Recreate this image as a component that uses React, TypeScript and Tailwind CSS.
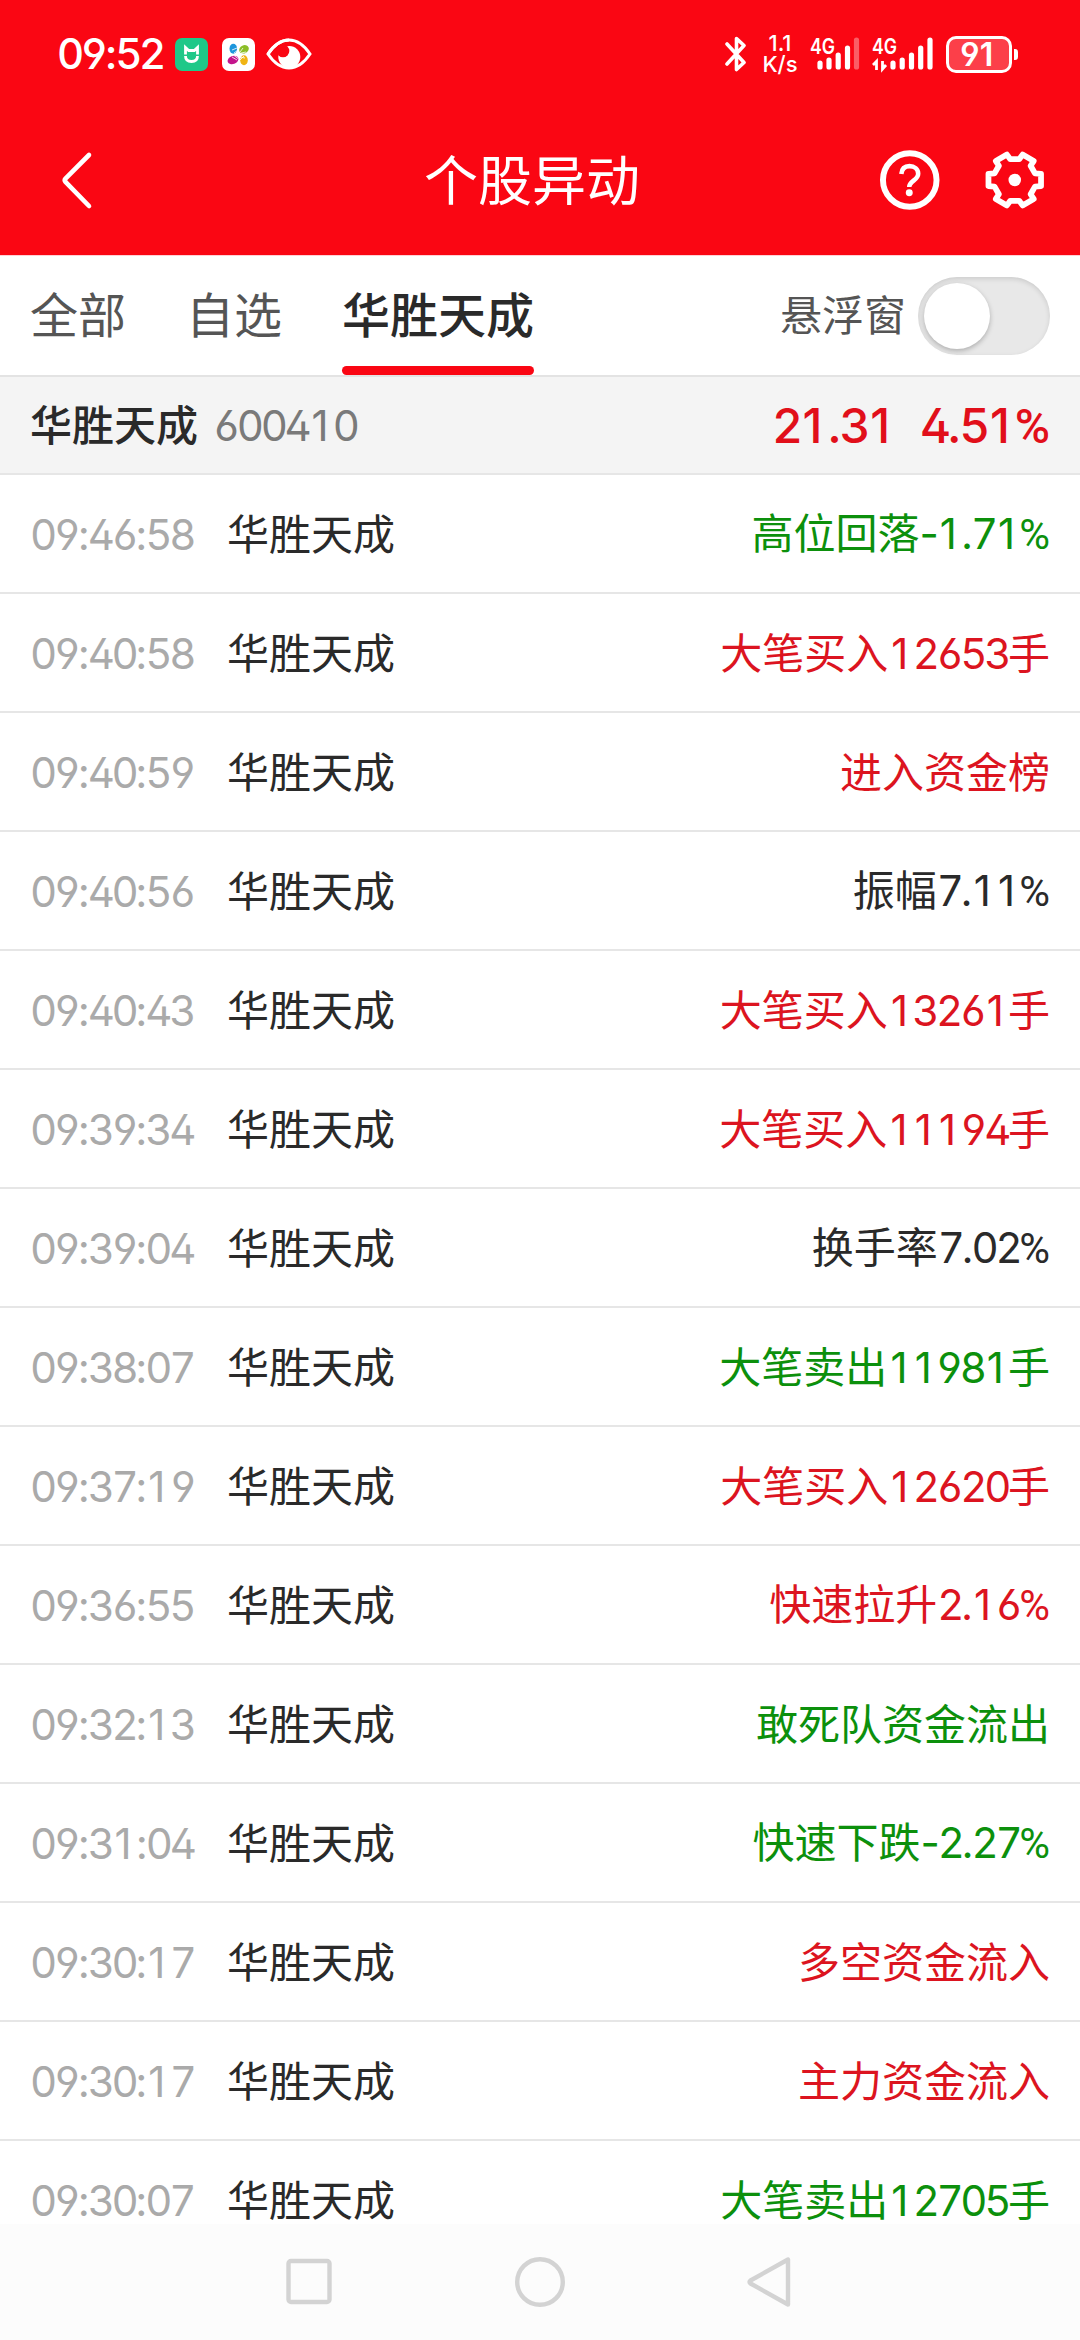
import { useState } from "react";
import clsx from "clsx";

type Trend = "up" | "down" | "flat";

interface Movement {
    time: string;
    label: string;
    value?: string;
    unit?: string;
    trend: Trend;
}

const STOCK_NAME = "华胜天成";

const TABS = ["全部", "自选", STOCK_NAME];

const MOVEMENTS: Movement[] = [
    { time: "09:46:58", label: "高位回落", value: "-1.71%", trend: "down" },
    { time: "09:40:58", label: "大笔买入", value: "12653", unit: "手", trend: "up" },
    { time: "09:40:59", label: "进入资金榜", trend: "up" },
    { time: "09:40:56", label: "振幅", value: "7.11%", trend: "flat" },
    { time: "09:40:43", label: "大笔买入", value: "13261", unit: "手", trend: "up" },
    { time: "09:39:34", label: "大笔买入", value: "11194", unit: "手", trend: "up" },
    { time: "09:39:04", label: "换手率", value: "7.02%", trend: "flat" },
    { time: "09:38:07", label: "大笔卖出", value: "11981", unit: "手", trend: "down" },
    { time: "09:37:19", label: "大笔买入", value: "12620", unit: "手", trend: "up" },
    { time: "09:36:55", label: "快速拉升", value: "2.16%", trend: "up" },
    { time: "09:32:13", label: "敢死队资金流出", trend: "down" },
    { time: "09:31:04", label: "快速下跌", value: "-2.27%", trend: "down" },
    { time: "09:30:17", label: "多空资金流入", trend: "up" },
    { time: "09:30:17", label: "主力资金流入", trend: "up" },
    { time: "09:30:07", label: "大笔卖出", value: "12705", unit: "手", trend: "down" },
];

const trendColor: Record<Trend, string> = {
    up: "text-[#dc1420]",
    down: "text-[#0c900c]",
    flat: "text-[#2a2a2a]",
};

// Tabular digits with open 4, 6 and 9. The tabular "1" has a foot,
// so the plain one is used and padded to the same width.
function Num({ text }: { text: string }) {
    return (
        <span className="tracking-[-0.05em]">
            {text.split(/(1|%|[02-9]+)/).map((part, i) => {
                if (part === "1") {
                    return (
                        <span key={i} className="pl-[0.072em] tracking-[0.1em]">
                            {part}
                        </span>
                    );
                }
                if (part === "%") {
                    return (
                        <span key={i} className="font-['Roboto',sans-serif] tracking-normal">
                            {part}
                        </span>
                    );
                }
                if (/\d/.test(part)) {
                    return (
                        <span
                            key={i}
                            className="tracking-[-0.081em] [font-feature-settings:'tnum','cv02','cv03','cv04']"
                        >
                            {part}
                        </span>
                    );
                }
                return part;
            })}
        </span>
    );
}

function StatusBar() {
    return (
        <div className="flex h-[105px] items-start justify-between pt-[32px] pr-[62px] pl-[57px]">
            <div className="flex h-[44px] items-center">
                <span className="w-[118px] text-[42px] leading-[44px] font-medium">
                    <Num text="09:52" />
                </span>
                <svg width="33" height="33" viewBox="0 0 33 33">
                    <rect width="33" height="33" rx="7" fill="#1ec888" />
                    <path d="M10.5 16.500V9.5l3.2 3h5.600l3.200-3v7" fill="none" stroke="#fff" strokeWidth="2.8" />
                    <path d="M10.5 18c0 3.700 2.400 5.500 6 5.500s6-1.800 6-5.500" fill="none" stroke="#fff" strokeWidth="2.800" />
                </svg>
                <svg className="ml-[14px]" width="33" height="33" viewBox="0 0 33 33">
                    <rect width="33" height="33" rx="7" fill="#fff" />
                    <ellipse cx="11.3" cy="10.8" rx="3.8" ry="5" fill="#1e96dc" />
                    <ellipse cx="22" cy="11.3" rx="5" ry="4" fill="#8cbe28" transform="rotate(-25 22 11.3)" />
                    <ellipse cx="11" cy="22" rx="5.6" ry="4" fill="#c3148c" transform="rotate(-20 11 22)" />
                    <ellipse cx="22" cy="22.3" rx="3.8" ry="5" fill="#f0b414" />
                    <path
                        d="M10 12l5-2M12 15l4-3M18 14l3-4M19 15l5-1M10 19l5 3M12 17.500l4 3M18 19l5 1M18 22l4-4"
                        stroke="#fff"
                        strokeWidth=".8"
                    />
                </svg>
                <svg className="ml-[11px]" width="46" height="32" viewBox="0 0 46 32">
                    <path
                        d="M2 16C8 7 15 2 23 2s15 5 21 14c-6 9-13 14-21 14S8 25 2 16z"
                        fill="none"
                        stroke="#fff"
                        strokeWidth="3"
                    />
                    <circle cx="23.300" cy="19" r="11" fill="#fff" />
                    <circle cx="17" cy="13" r="6.300" fill="#fa0613" />
                    <path d="M2 16C8 7 15 2 23 2" fill="none" stroke="#fff" strokeWidth="3" />
                </svg>
            </div>

            <div className="flex h-[44px] items-center">
                <svg width="22" height="36" viewBox="0 0 22 36">
                    <path
                        d="M2 8l17 18.500-7.500 7V2.500l7.500 7L2 28"
                        fill="none"
                        stroke="#fff"
                        strokeWidth="3.6"
                        strokeLinejoin="round"
                        strokeLinecap="round"
                    />
                </svg>
                <div className="ml-[15px] flex w-[36px] flex-col items-center text-[22px] leading-[21px] font-medium">
                    <span>1.1</span>
                    <span>K/s</span>
                </div>
                <svg className="ml-[12px]" width="52" height="44" viewBox="0 -4 52 44">
                    <text x="0" y="17.5" fontSize="22" fontWeight="600" fill="#fff" textLength="25" lengthAdjust="spacingAndGlyphs">
                        4G
                    </text>
                    <g stroke="#fff" strokeWidth="5.2" strokeLinecap="round">
                        <path d="M10 27v4M19 24v7M28.200 19v12M37.500 12v19" />
                        <path d="M46.500 4v27" opacity=".35" />
                    </g>
                </svg>
                <svg className="ml-[10px]" width="62" height="44" viewBox="0 -4 62 44">
                    <text x="0" y="17.5" fontSize="22" fontWeight="600" fill="#fff" textLength="25" lengthAdjust="spacingAndGlyphs">
                        4G
                    </text>
                    <path d="M4.500 34V25.500L1 29M10.500 25v8l3.500-4" fill="none" stroke="#fff" strokeWidth="2.800" />
                    <g stroke="#fff" strokeWidth="5.200" strokeLinecap="round">
                        <path d="M21 27v4M30.200 24v7M39.500 19v12M48.700 12v19M58 4v27" />
                    </g>
                </svg>
                <div className="ml-[12px] flex h-[37px] w-[66px] items-center justify-center rounded-[10px] border-3 border-white bg-[#fc3f49]">
                    <span className="pr-[2px] text-[32px] leading-[31px] font-semibold">
                        <Num text="91" />
                    </span>
                </div>
                <div className="ml-[2px] h-[11px] w-[4px] rounded-r-[3px] bg-white" />
            </div>
        </div>
    );
}

function Header() {
    return (
        <header className="h-[255px] bg-[#fa0613] text-white">
            <StatusBar />
            <div className="flex h-[150px] items-center justify-between pr-[35px] pl-[59px]">
                <button className="flex w-[126px]" aria-label="返回">
                    <svg width="36" height="60" viewBox="0 0 36 60">
                        <path
                            d="M30 5L6.500 28.500q-1.500 1.700 0 3.400L30 56"
                            fill="none"
                            stroke="#fff"
                            strokeWidth="4.600"
                            strokeLinecap="round"
                        />
                    </svg>
                </button>
                <h1 className="pt-[3px] text-[54px] leading-[54px]">个股异动</h1>
                <div className="flex w-[166px] items-center justify-end gap-[43px]">
                    <svg width="62" height="62" viewBox="0 0 62 62">
                        <circle cx="31" cy="31" r="27" fill="none" stroke="#fff" strokeWidth="6" />
                        <path
                            d="M22.500 25c.5-5.500 3.800-8 8.200-8 5 0 8.800 3 8.800 7.600 0 6.500-9 7.500-9 13.400"
                            fill="none"
                            stroke="#fff"
                            strokeWidth="4.600"
                        />
                        <circle cx="30.500" cy="43.800" r="3.500" fill="#fff" />
                    </svg>
                    <svg width="62" height="62" viewBox="0 0 62 62">
                        <path
                            d="M26.500 10H35.500L38.900 5.400L50.100 11.900L47 16.600L51.400 24.400L57.500 24.900V37.100L51.400 37.600L47 45.400L50.100 50.100L38.900 56.600L35.500 52H26.500L23.100 56.600L11.900 50.100L15 45.400L10.600 37.600L4.500 37.100V24.900L10.600 24.400L15 16.600L11.900 11.900L23.100 5.400Z"
                            fill="none"
                            stroke="#fff"
                            strokeWidth="5.800"
                            strokeLinejoin="round"
                        />
                        <circle cx="31" cy="31" r="6.300" fill="#fff" />
                    </svg>
                </div>
            </div>
        </header>
    );
}

function FloatSwitch() {
    const [isOn, setIsOn] = useState(false);

    return (
        <div className="flex items-center">
            <span className="text-[42px] leading-[60px] text-[#555]">悬浮窗</span>
            <button
                role="switch"
                aria-checked={isOn}
                aria-label="悬浮窗"
                onClick={() => setIsOn(!isOn)}
                className={clsx(
                    "ml-[12px] flex h-[78px] w-[132px] items-center rounded-full px-[6px] shadow-[inset_0_2px_5px_rgba(0,0,0,0.12)]",
                    isOn ? "justify-end bg-[#fa0613]" : "bg-[#e8e8e8]",
                )}
            >
                <span className="size-[66px] rounded-full bg-white shadow-[0_2px_5px_rgba(0,0,0,0.25)]" />
            </button>
        </div>
    );
}

function MovementRow({ item }: { item: Movement }) {
    return (
        <li className="flex h-[119px] shrink-0 items-center border-b-2 border-[#e6e6e6] px-[30px] pt-[2px] text-[42px] leading-[60px]">
            <span className="w-[197px] text-[#aaa]">
                <Num text={item.time} />
            </span>
            <span className="text-[#2a2a2a]">{STOCK_NAME}</span>
            <span className={clsx("ml-auto", trendColor[item.trend])}>
                {item.label}
                {item.value && <Num text={item.value} />}
                {item.unit}
            </span>
        </li>
    );
}

function NavBar() {
    return (
        <nav className="flex h-[116px] shrink-0 items-center justify-between bg-[#fcfcfc] px-[284px]">
            <svg width="50" height="52" viewBox="0 0 50 52" fill="none" stroke="#d3d3d3" strokeWidth="4.400">
                <rect x="4.500" y="5" width="41" height="41" rx="2.500" />
            </svg>
            <svg width="50" height="52" viewBox="0 0 50 52" fill="none" stroke="#d3d3d3" strokeWidth="4.400">
                <circle cx="25" cy="26" r="22.800" />
            </svg>
            <svg
                width="50"
                height="52"
                viewBox="0 0 50 52"
                fill="none"
                stroke="#d3d3d3"
                strokeWidth="4.400"
                strokeLinejoin="round"
            >
                <path d="M42 3.500v45L4.500 27.500q-2-1.500 0-3z" />
            </svg>
        </nav>
    );
}

function App() {
    const [tab, setTab] = useState(STOCK_NAME);

    return (
        <div className="flex h-[2340px] w-[1080px] flex-col overflow-hidden bg-white font-['Inter','Noto_Sans_CJK_SC',sans-serif]">
            <Header />
            <div className="flex h-[122px] shrink-0 items-center justify-between border-t border-b-2 border-t-[#ffd0d5] border-b-[#e3e3e3] px-[30px]">
                <div className="flex h-full gap-[60px]">
                    {TABS.map((name) => (
                        <button
                            key={name}
                            onClick={() => setTab(name)}
                            className={clsx(
                                "flex h-full flex-col justify-between pt-[27px] text-[48px] leading-[66px]",
                                name === tab ? "font-medium text-[#2a2a2a]" : "text-[#555]",
                            )}
                        >
                            {name}
                            {name === tab && <span className="h-[9px] w-full rounded-full bg-[#fa0613]" />}
                        </button>
                    ))}
                </div>
                <FloatSwitch />
            </div>

            <div className="flex h-[98px] shrink-0 items-center border-b-2 border-[#e6e6e6] bg-[#f4f4f4] px-[30px] pt-[2px]">
                <span className="text-[42px] leading-[60px] font-medium text-[#2a2a2a]">{STOCK_NAME}</span>
                <span className="ml-[15px] text-[42px] leading-[60px] text-[#7a7a7a]">
                    <Num text="600410" />
                </span>
                <div className="ml-auto flex gap-[25px] text-[48px] leading-[60px] font-medium text-[#e10f1a]">
                    <span>
                        <Num text="21.31" />
                    </span>
                    <span>
                        <Num text="4.51%" />
                    </span>
                </div>
            </div>

            <ul className="flex min-h-0 flex-1 flex-col overflow-hidden">
                {MOVEMENTS.map((item, i) => (
                    <MovementRow key={i} item={item} />
                ))}
            </ul>
            <NavBar />
        </div>
    );
}

export default App;
